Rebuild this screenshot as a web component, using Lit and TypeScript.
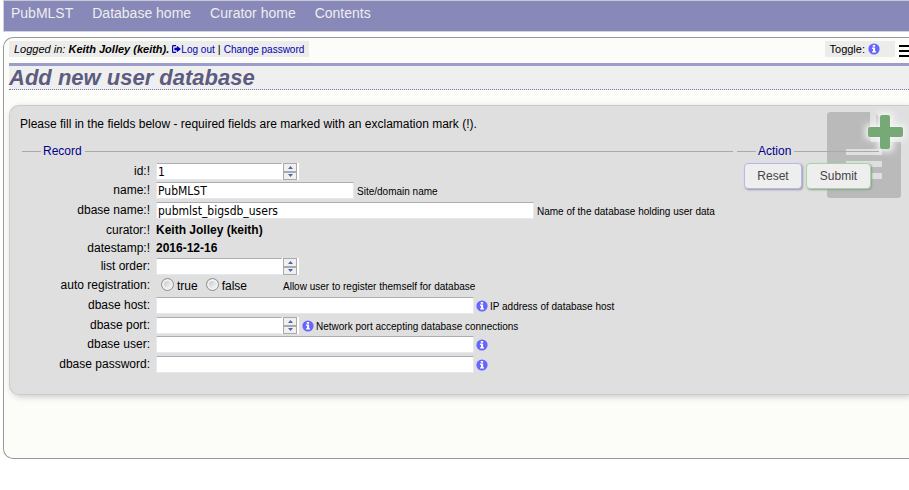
import { LitElement, html, css, svg, nothing } from "lit";
import { customElement } from "lit/decorators.js";

interface Field {
  id: string;
  label: string;
  kind: "text" | "number" | "static" | "radio" | "password";
  size?: "small" | "medium" | "large";
  value?: string;
  info?: boolean;
  help?: string;
}

const FIELDS: Field[] = [
  { id: "id", label: "id:!", kind: "number", value: "1" },
  { id: "name", label: "name:!", kind: "text", size: "small", value: "PubMLST", help: "Site/domain name" },
  { id: "dbase_name", label: "dbase name:!", kind: "text", size: "large", value: "pubmlst_bigsdb_users", help: "Name of the database holding user data" },
  { id: "curator", label: "curator:!", kind: "static", value: "Keith Jolley (keith)" },
  { id: "datestamp", label: "datestamp:!", kind: "static", value: "2016-12-16" },
  { id: "list_order", label: "list order:", kind: "number" },
  { id: "auto_registration", label: "auto registration:", kind: "radio", help: "Allow user to register themself for database" },
  { id: "dbase_host", label: "dbase host:", kind: "text", size: "medium", info: true, help: "IP address of database host" },
  { id: "dbase_port", label: "dbase port:", kind: "number", info: true, help: "Network port accepting database connections" },
  { id: "dbase_user", label: "dbase user:", kind: "text", size: "medium", info: true },
  { id: "dbase_password", label: "dbase password:", kind: "password", size: "medium", info: true },
];

const infoIcon = () => html`<svg class="info" viewBox="0 0 12 12" aria-hidden="true">
  <circle cx="6" cy="6" r="5.6" fill="#66f"></circle>
  <path d="M4.8 2h2.3v1.7H4.8zM4.1 4.6H7.1v3.7h.9v1.3H4.1V8.3H5V6h-.9z" fill="#fff"></path>
</svg>`;

const arrow = (d: string) => html`<svg viewBox="0 0 5 3" aria-hidden="true">${svg`<path d=${d} fill="#4d65b0"></path>`}</svg>`;

@customElement("app-root")
export class AppRoot extends LitElement {
  static styles = css`
    :host {
      display: block;
      overflow: hidden;
      background: #fff;
      color: #000;
      font: 12px/16px "Liberation Sans", Arial, sans-serif;
    }
    a { color: #0000b4; text-decoration: none; }
    .menu {
      display: flex;
      gap: 19px;
      height: 30px;
      margin-left: 3px;
      padding-left: 7px;
      box-sizing: content-box;
      border: 1px solid #d2d2dc;
      border-top-color: #c8c8d4;
      border-right: 0;
      background: #8888b9;
      font-size: 14px;
      line-height: 24px;
      margin-bottom: 5px;
    }
    .menu a { color: #eee; }
    .page {
      margin-left: 3px;
      padding: 3px 0 63px 5px;
      border: 1px solid #999;
      border-right: 0;
      border-radius: 10px 0 0 10px;
      background: #fcfdf8;
    }
    .bar { display: flex; justify-content: space-between; margin-bottom: 6px; font-size: 11px; }
    .login { padding: 0 5px; background: #ececea; }
    .login a { font-size: 10px; line-height: 12px; }
    .login svg { width: 9px; height: 8px; }
    .tools { display: flex; }
    .toggle { display: flex; align-items: center; gap: 3px; margin-right: 4px; padding: 0 15px 0 5px; background: #ececea; }
    .burger { width: 10px; height: 16px; padding: 0; border: 0; background: none; }
    .burger svg { display: block; width: 10px; height: 16px; }
    h1 {
      margin: 0 0 15px;
      border-top: 3px solid #9c9ccc;
      border-bottom: 1px dotted #7878a8;
      background: #efefef;
      color: #5c5c80;
      font: italic bold 22px/23px "Liberation Sans", Arial, sans-serif;
    }
    .panel {
      position: relative;
      padding: 10px 0 18px 10px;
      border: 1px solid #ccc;
      border-right: 0;
      border-radius: 10px 0 0 10px;
      background: #dfdfdf;
      box-shadow: 2px 2px 6px #ccc;
    }
    .panel p { margin: 0 0 11px; }
    .watermark { position: absolute; top: 0; right: 0; width: 90px; height: 100px; }
    form { position: relative; display: flex; gap: 4px; padding-left: 2px; }
    fieldset { min-width: 0; margin: 0; padding: 0; border: 0; border-top: 1px solid #aaa; }
    legend { margin-left: 19px; padding: 0 3px 0 2px; color: #00008b; }
    .record { flex: 0 1 711px; }
    .action { flex: 0 0 142px; }
    .rows { padding: 4px 0 0; }
    .row { display: flex; align-items: flex-start; height: 20px; white-space: nowrap; }
    .row.number { height: 19px; }
    .row.static { height: 18px; }
    .label { width: 128px; margin-right: 6px; text-align: right; }
    .box {
      box-sizing: border-box;
      height: 17px;
      margin: 0;
      padding: 0 1px;
      border: 1px solid #e3e9ef;
      border-top-color: #abadb3;
      border-radius: 1px;
      background: #fff;
      color: #000;
      font: 12px/15px Tahoma, "DejaVu Sans Condensed", "Noto Sans", sans-serif;
      appearance: textfield;
    }
    .box::-webkit-inner-spin-button { display: none; }
    .small { width: 198px; }
    .medium { width: 318px; }
    .large { width: 378px; }
    .num { display: flex; width: 143px; height: 17px; margin-right: 1px; }
    .num .box { flex: 1; min-width: 0; border-right: 0; }
    .spin { display: flex; flex-direction: column; width: 17px; height: 17px; background: #fff; }
    .spin button { display: flex; flex: 1; align-items: center; justify-content: center; width: 14px; margin-left: 1px; padding: 0; border: 1px solid #aaa; background: #f0f0f0; }
    .spin svg { width: 5px; height: 3px; }
    .help { margin-left: 3px; padding-top: 3px; font-size: 10px; line-height: 14px; }
    .info { flex: none; width: 12px; height: 12px; }
    .row .info { margin: 3px 0 0 2px; }
    .info + .help { margin-left: 2px; }
    .options { display: flex; gap: 3px; width: 124px; padding-top: 1px; }
    .options label { display: flex; margin-left: 5px; gap: 3px; }
    input[type="radio"] {
      appearance: none;
      box-sizing: border-box;
      width: 13px;
      height: 13px;
      margin: 0;
      border: 1px solid #8e8f8f;
      border-radius: 50%;
      background: linear-gradient(135deg, #b8bcc0, #f6f6f6 80%);
      box-shadow: inset 0 0 0 2px #f0f0f0;
    }
    .buttons { display: flex; gap: 4px; padding: 4px 0 0 7px; }
    .buttons button {
      height: 26px;
      padding: 0;
      border: 1px solid #b8b8f0;
      border-radius: 4px;
      background: #eee;
      box-shadow: 1px 1px 2px #999;
      color: #444;
      font: 12px "Liberation Sans", Arial, sans-serif;
    }
    .buttons .reset { width: 58px; }
    .buttons .submit { width: 65px; border-color: #a0d8a0; }
  `;

  private control(f: Field) {
    switch (f.kind) {
      case "static":
        return html`<b>${f.value}</b>`;
      case "radio":
        return html`<span class="options" role="radiogroup" aria-label="auto registration">
          <label><input type="radio" name=${f.id} value="true" />true</label>
          <label><input type="radio" name=${f.id} value="false" />false</label>
        </span>`;
      case "number":
        return html`<span class="num"><input class="box" id=${f.id} type="number" .value=${f.value ?? ""} /><span class="spin"
          ><button type="button" aria-label="Increase">${arrow("M0 3L2.5 0L5 3z")}</button
          ><button type="button" aria-label="Decrease">${arrow("M0 0L2.5 3L5 0z")}</button></span></span>`;
      default:
        return html`<input class="box ${f.size}" id=${f.id} type=${f.kind} .value=${f.value ?? ""} />`;
    }
  }

  private row(f: Field) {
    const labelled = f.kind !== "static" && f.kind !== "radio";
    return html`<div class="row ${f.kind}">
      ${labelled ? html`<label class="label" for=${f.id}>${f.label}</label>` : html`<span class="label">${f.label}</span>`}
      ${this.control(f)}${f.info ? infoIcon() : nothing}${f.help ? html`<span class="help">${f.help}</span>` : nothing}
    </div>`;
  }

  render() {
    return html`
      <nav class="menu">
        <a href="#">PubMLST</a><a href="#">Database home</a><a href="#">Curator home</a><a href="#">Contents</a>
      </nav>
      <main class="page">
        <div class="bar">
          <div class="login">
            <i>Logged in: <b>Keith Jolley (keith).</b></i>
            <a href="#"><svg viewBox="0 0 9 8" aria-hidden="true"><path d="M4 .7H1.2Q.6.7.6 1.3v5.4q0 .6.6.6H4" fill="none" stroke="#0000b4" stroke-width="1.2"></path><path d="M2.4 2.7h2.4V.8L9 4 4.8 7.2V5.3H2.4z" fill="#0000b4"></path></svg>Log out</a> |
            <a href="#">Change password</a>
          </div>
          <div class="tools">
            <div class="toggle">Toggle: ${infoIcon()}</div>
            <button class="burger" aria-label="Menu"><svg viewBox="0 0 10 16"><path d="M0 4h10v2H0zM0 9h10v2H0zM0 14h10v2H0z"></path></svg></button>
          </div>
        </div>
        <h1>Add new user database</h1>
        <section class="panel">
          <svg class="watermark" viewBox="0 0 90 100" aria-hidden="true">
            <defs><filter id="glow" x="-40%" y="-40%" width="180%" height="180%"><feGaussianBlur stdDeviation="3"></feGaussianBlur></filter></defs>
            <path d="M12 6h39v28q0 2 2 2h29v53q0 3-3 3H11q-3 0-3-3V9q0-3 4-3z" fill="#bababa"></path>
            <path d="M57 8l10 10v11H57z" fill="#bababa"></path>
            <path d="M27 43h36v6H27zM27 55h36v6H27zM27 67h36v6H27z" fill="#dfdfdf"></path>
            <path d="M60 8h13v12h12v12H73v12H60V32H48V20h12z" fill="#f4f4f4" stroke="#f4f4f4" stroke-width="3" filter="url(#glow)"></path>
            <path d="M63 9h6q2 0 2 2v10h11q2 0 2 2v6q0 2-2 2H71v10q0 2-2 2h-6q-2 0-2-2V31H51q-2 0-2-2v-6q0-2 2-2h10V11q0-2 2-2z" fill="#77a977"></path>
          </svg>
          <p>Please fill in the fields below - required fields are marked with an exclamation mark (!).</p>
          <form @submit=${(e: Event) => e.preventDefault()}>
            <fieldset class="record">
              <legend>Record</legend>
              <div class="rows">${FIELDS.map((f) => this.row(f))}</div>
            </fieldset>
            <fieldset class="action">
              <legend>Action</legend>
              <div class="buttons"><button class="reset" type="reset">Reset</button><button class="submit" type="submit">Submit</button></div>
            </fieldset>
          </form>
        </section>
      </main>
    `;
  }
}
